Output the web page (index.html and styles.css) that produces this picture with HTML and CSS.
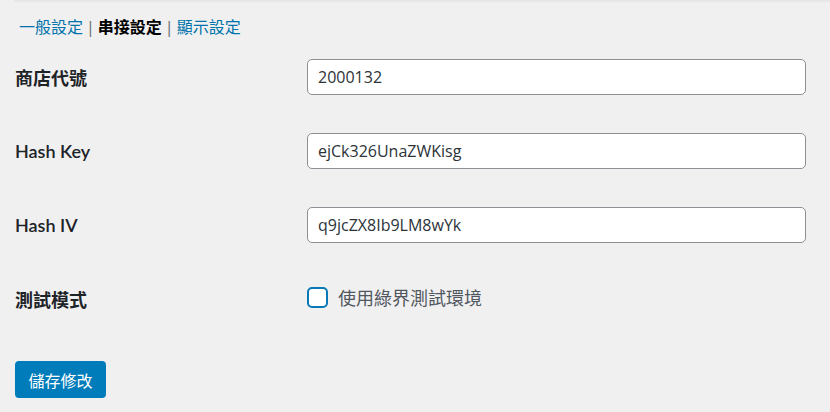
FILE: index.html
```html
<!DOCTYPE html>
<html lang="zh-Hant">
<head>
    <meta charset="UTF-8">
    <title>串接設定</title>
    <link rel="stylesheet" href="styles.css">
</head>
<body>
    <div class="top-edge"></div>
    <div class="wrap">
        <ul class="subnav">
            <li><a href="#">一般設定</a></li>
            <li class="sep">|</li>
            <li><a href="#" class="current">串接設定</a></li>
            <li class="sep">|</li>
            <li><a href="#">顯示設定</a></li>
        </ul>

        <form class="settings">
            <div class="row">
                <label class="field-name" for="merchant-id">商店代號</label>
                <input type="text" id="merchant-id" value="2000132">
            </div>
            <div class="row">
                <label class="field-name" for="hash-key">Hash Key</label>
                <input type="text" id="hash-key" value="ejCk326UnaZWKisg">
            </div>
            <div class="row">
                <label class="field-name" for="hash-iv">Hash IV</label>
                <input type="text" id="hash-iv" value="q9jcZX8Ib9LM8wYk">
            </div>
            <div class="row">
                <span class="field-name">測試模式</span>
                <label class="check">
                    <span class="box"></span>
                    <span>使用綠界測試環境</span>
                </label>
            </div>

            <button type="button" class="save">儲存修改</button>
        </form>
    </div>
</body>
</html>
```

FILE: styles.css
```css
body {
    margin: 0;
    background-color: #f0f0f1;
    font-family: "Open Sans", "Noto Sans CJK TC", sans-serif;
    font-size: 18px;
    color: #1d2327;
}

.top-edge {
    height: 3px;
    margin-left: 14px;
    background: linear-gradient(#e4e4e4, #f0f0f1);
}

.wrap {
    padding: 0 24px 0 15px;
}

.subnav {
    list-style: none;
    margin: 12px 0 0;
    padding: 0 0 0 4px;
    display: flex;
    gap: 3px;
    line-height: 25px;
    font-size: 16px;
}

.subnav a {
    color: #0073aa;
    text-decoration: none;
}

.subnav a.current {
    color: #000;
    font-weight: bold;
}

.subnav .sep {
    color: #646970;
}

.row {
    display: grid;
    grid-template-columns: 292px 1fr;
    align-items: center;
    height: 74px;
}

.field-name {
    font-family: Lato, "Noto Sans CJK TC", sans-serif;
    font-weight: 600;
    color: #1d2327;
}

.row input {
    height: 36px;
    box-sizing: border-box;
    padding: 0 10px;
    border: 1px solid #8c8f94;
    border-radius: 5px;
    background: #fff;
    font-family: "Open Sans", sans-serif;
    font-size: 16px;
    color: #2c3338;
}

.check {
    display: flex;
    align-items: center;
    gap: 10px;
    color: #50575e;
    margin-top: -4px;
}

.check .box {
    width: 21px;
    height: 21px;
    box-sizing: border-box;
    border: 2px solid #0a78b6;
    border-radius: 5px;
    background: #fff;
}

.save {
    margin-top: 25px;
    width: 91px;
    height: 37px;
    border: none;
    border-radius: 4px;
    background-color: #007cba;
    color: #fff;
    font-family: "Noto Sans CJK TC", sans-serif;
    font-size: 16px;
}
```
